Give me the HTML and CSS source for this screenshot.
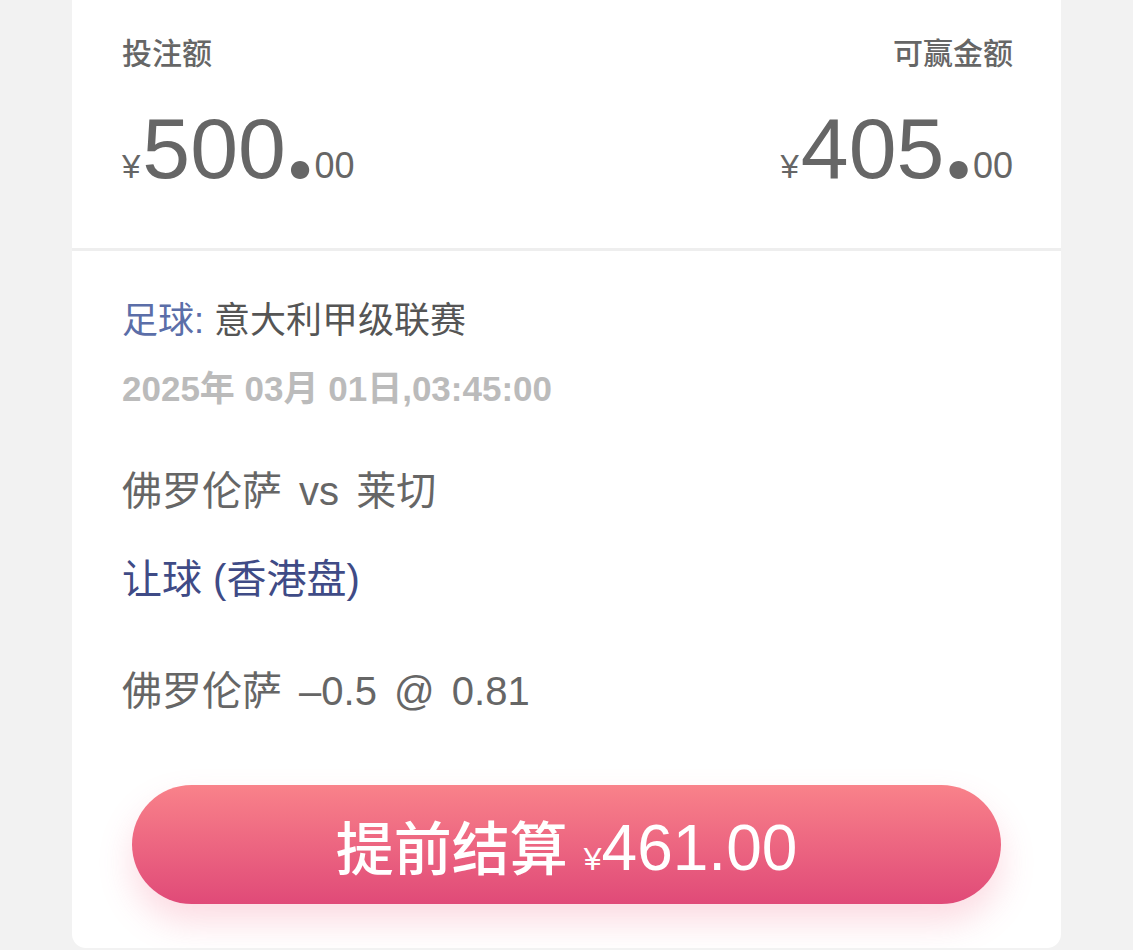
FILE: index.html
```html
<!DOCTYPE html>
<html lang="zh-CN">

<head>
  <meta charset="UTF-8">
  <title>注单详情</title>
  <link rel="stylesheet" href="styles.css">
</head>

<body>
  <div class="page">
    <div class="prev-edge"></div>
    <div class="card">
      <div class="totals">
        <div class="total">
          <div class="label">投注额</div>
          <div class="amount"><span class="cur">¥</span><span class="int">500</span><span class="dot">.</span><span class="dec">00</span></div>
        </div>
        <div class="total right">
          <div class="label">可赢金额</div>
          <div class="amount"><span class="cur">¥</span><span class="int">405</span><span class="dot">.</span><span class="dec">00</span></div>
        </div>
      </div>

      <div class="detail">
        <div class="league"><span class="sport">足球:</span> 意大利甲级联赛</div>
        <div class="date">2025年 03月 01日,03:45:00</div>
        <div class="match">佛罗伦萨 vs 莱切</div>
        <div class="market">让球 (香港盘)</div>
        <div class="pick">佛罗伦萨 –0.5 @ 0.81</div>
        <button class="cashout">提前结算 <span class="cur">¥</span><span class="num">461.00</span></button>
      </div>
    </div>
  </div>
</body>

</html>
```

FILE: styles.css
```css
body {
  margin: 0;
  background-color: #f2f2f2;
  font-family: 'Liberation Sans', 'Noto Sans CJK SC', sans-serif;
  color: #666666;
}

.page {
  padding: 0 72px;
}

/* bottom of the card above, just peeking in */
.prev-edge {
  height: 0;
  margin: 0 58px;
  box-shadow: 0 1px 4px 1px rgba(0, 0, 0, 0.08);
}

.card {
  background-color: #ffffff;
  border-radius: 0 0 14px 14px;
}

.totals {
  display: flex;
  justify-content: space-between;
  padding: 34px 48px 32px 50px;
  border-bottom: 3px solid #eeeeee;
}

.total.right {
  text-align: right;
}

.label {
  font-size: 30px;
  line-height: 40px;
  font-weight: 500;
}

.amount {
  margin-top: 31px;
  line-height: 86px;
  white-space: nowrap;
}

.amount .cur {
  font-size: 33px;
}

.amount .int {
  font-size: 86px;
  margin-left: 2px;
}

.amount .dot {
  font-family: Lato, 'Liberation Sans', sans-serif;
  font-size: 112px;
  font-weight: 900;
  line-height: 0;
  margin-left: 1px;
}

.amount .dec {
  font-size: 36px;
  margin-left: 1px;
}

.detail {
  padding: 46px 60px 44px 50px;
}

.league {
  font-size: 36px;
  line-height: 48px;
  color: #555555;
}

.sport {
  color: #5b6ea8;
}

.date {
  margin-top: 20px;
  font-size: 35px;
  line-height: 48px;
  font-weight: bold;
  color: #bbbbbb;
}

.match {
  margin-top: 52px;
  font-size: 40px;
  line-height: 52px;
  word-spacing: 6px;
}

.market {
  margin-top: 36px;
  font-size: 40px;
  line-height: 52px;
  color: #3f4b86;
}

.pick {
  margin-top: 60px;
  font-size: 40px;
  line-height: 52px;
  word-spacing: 6px;
}

.cashout {
  display: block;
  width: calc(100% - 10px);
  height: 119px;
  margin: 68px 0 0 10px;
  border: none;
  border-radius: 60px;
  background: linear-gradient(#f9828a, #e04a78);
  box-shadow: 0 18px 34px rgba(240, 90, 125, 0.22);
  color: #ffffff;
  font-family: 'Liberation Sans', 'Noto Sans CJK SC', sans-serif;
  font-size: 58px;
  font-weight: 500;
}

.cashout .cur {
  font-size: 32px;
}

.cashout .num {
  font-size: 64px;
}
```
